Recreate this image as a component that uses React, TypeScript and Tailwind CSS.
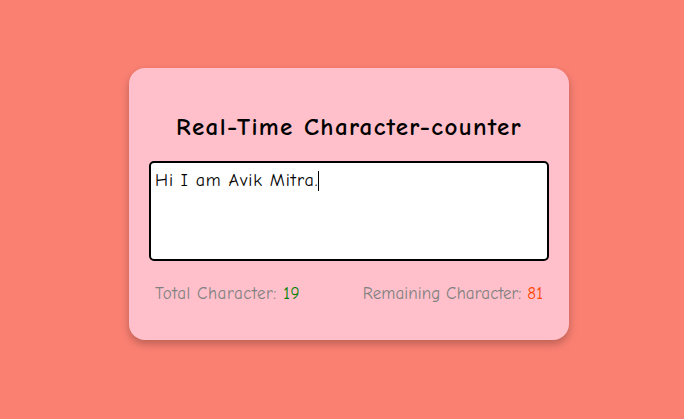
import React from "react";

export default function App() {
  return (
    <div
      className="min-h-screen w-full bg-[#fa8072] flex justify-center pt-[68px] pl-[14px]"
      style={{ fontFamily: '"Comic Sans MS", "Comic Neue", "DejaVu Sans", sans-serif' }}
    >
      <div className="w-[440px] h-[272px] rounded-[16px] bg-[#ffc0cb] shadow-[0_4px_8px_rgba(0,0,0,0.25)] px-5 pt-[43px] flex flex-col">
        <h1 className="text-center text-[25px] leading-[32px] font-bold text-black tracking-[1.35px]">
          Real-Time Character-counter
        </h1>
        <div className="mt-[18px] h-[100px] w-[400px] bg-white border-2 border-black rounded-[5px] px-[4px] pt-[7px] text-[18px] leading-[22px] text-black tracking-[0.9px]">
          Hi I am Avik Mitra.<span className="inline-block w-px h-[20px] bg-black align-middle -mt-[2px]" />
        </div>
        <div className="mt-[21px] flex justify-between px-[6px] text-[17px] leading-[24px] text-[#808080]">
          <p className="tracking-[0.55px]">
            Total Character: <span className="text-[#008000]">19</span>
          </p>
          <p className="tracking-[0.1px]">
            Remaining Character: <span className="text-[#ff4500]">81</span>
          </p>
        </div>
      </div>
    </div>
  );
}
